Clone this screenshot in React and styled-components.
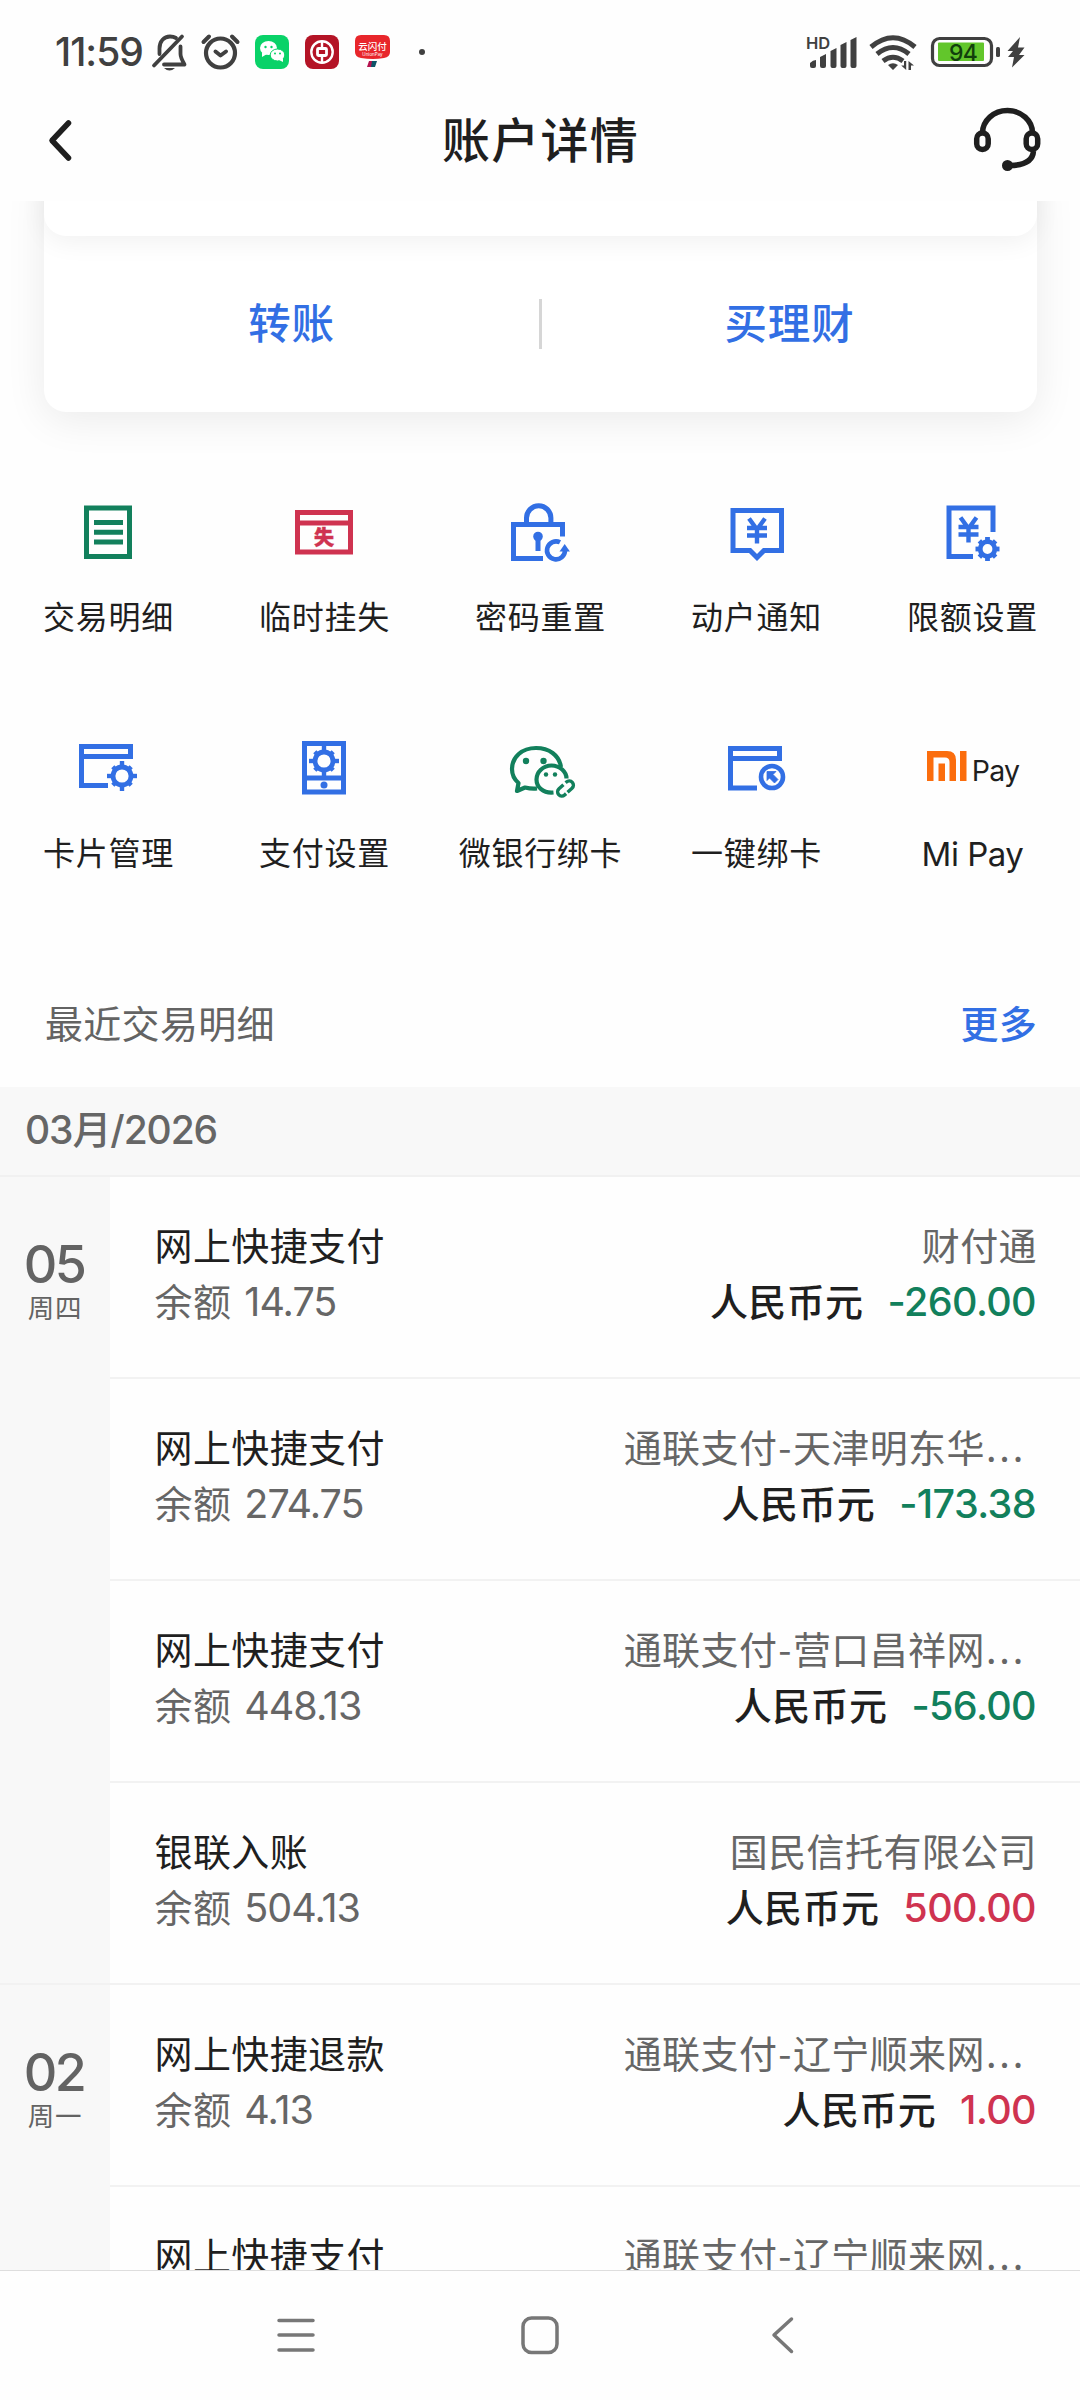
import React from "react";
import styled, { createGlobalStyle } from "styled-components";

const CJK = `"Noto Sans CJK SC", "Noto Sans", sans-serif`;
const NUM = `Inter, "Noto Sans CJK SC", sans-serif`;
const BLUE = "#326fe4";
const GREEN = "#12805c";
const RED = "#cf3350";

const GlobalStyle = createGlobalStyle`
  body { margin: 0; background: #fefefe; }
  * { box-sizing: border-box; }
  svg { display: block; overflow: visible; }
`;

const Screen = styled.div`
  width: 1080px;
  height: 2400px;
  display: flex;
  flex-direction: column;
  overflow: hidden;
  background: #fefefe;
  color: #1f1f1f;
  font-family: ${CJK};
  white-space: nowrap;
`;

const StatusBar = styled.div`
  flex: none;
  height: 104px;
  display: flex;
  align-items: center;
  justify-content: space-between;
  padding: 0 55px 0 55px;
`;
const Clock = styled.span`
  width: 93px;
  font: 500 39px/40px ${NUM};
  letter-spacing: -1px;
  color: #404040;
`;
const StatusGroup = styled.div`
  display: flex;
  align-items: center;
`;

const Header = styled.header`
  flex: none;
  height: 97px;
  display: flex;
  align-items: center;
  justify-content: space-between;
  padding: 0 39px 25px 48px;
`;
const Title = styled.h1`
  margin: -6px 8px 0 0;
  font: 500 48px/72px ${CJK};
  letter-spacing: 1.2px;
`;

const Content = styled.main`
  flex: none;
  height: 2069px;
  overflow: hidden;
`;

const Card = styled.section`
  margin: -40px 43px 0 44px;
  height: 251px;
  border-radius: 22px;
  background: #fff;
  box-shadow: 0 8px 40px rgba(0, 0, 0, 0.08);
`;
const CardTop = styled.div`
  height: 75px;
  border-radius: 22px;
  background: #fff;
  box-shadow: 0 6px 26px rgba(0, 0, 0, 0.06);
`;
const CardActions = styled.div`
  height: 176px;
  display: grid;
  grid-template-columns: 1fr 3px 1fr;
  align-items: center;
`;
const CardAction = styled.a`
  padding-bottom: 6px;
  text-align: center;
  color: ${BLUE};
  font: 500 42.5px/60px ${CJK};
  letter-spacing: 0.8px;
`;
const Divider = styled.i`
  height: 50px;
  background: #d6d6d6;
`;

const Grid = styled.div`
  margin-top: 70px;
  display: grid;
  grid-template-columns: repeat(5, 216px);
  grid-auto-rows: 236px;
`;
const Tile = styled.div`
  display: flex;
  flex-direction: column;
  align-items: center;
  padding-top: 10px;
`;
const IconBox = styled.div`
  height: 80px;
  display: flex;
  align-items: center;
`;
const TileLabel = styled.span`
  margin: 19px 0 0 1px;
  font: 400 32px/48px ${CJK};
  letter-spacing: 0.7px;
`;
const MiPayLabel = styled(TileLabel)`
  margin-top: 22px;
  font-size: 33px;
  font-family: ${NUM};
  letter-spacing: -0.5px;
`;
const MiPayLogo = styled.div`
  display: flex;
  align-items: flex-end;
  gap: 5px;
  margin: -4px 0 0 2px;
  font: 400 28.5px/20px ${NUM};
  letter-spacing: -0.7px;
`;

const SectionHead = styled.div`
  height: 133px;
  display: flex;
  align-items: center;
  justify-content: space-between;
  padding: 2px 43px 0 45px;
  font-size: 38px;
  letter-spacing: 0.3px;
  color: #636363;
`;
const More = styled.a`
  color: ${BLUE};
  font-weight: 500;
`;
const MonthBar = styled.div`
  height: 90px;
  padding: 0 25px 2px;
  display: flex;
  align-items: center;
  border-bottom: 2px solid #f1f1f1;
  background: #f8f8f8;
  color: #666;
  font: 500 39px/56px ${NUM};
  letter-spacing: -1.1px;
`;

const DayGroup = styled.section`
  display: grid;
  grid-template-columns: 110px 1fr;
  border-bottom: 2px solid #f2f2f2;
`;
const DayCell = styled.div`
  padding-top: 63px;
  display: flex;
  flex-direction: column;
  align-items: center;
  background: #f8f8f8;
  color: #636363;
`;
const DayNumber = styled.b`
  margin-right: 2px;
  font: 500 52px/50px ${NUM};
  letter-spacing: -2.5px;
`;
const Weekday = styled.span`
  margin-top: -1px;
  font-size: 26.5px;
  line-height: 36px;
  letter-spacing: 0.8px;
`;
const Row = styled.div`
  height: 202px;
  padding: 39px 43px 0 44.5px;
  display: grid;
  grid-template-columns: auto auto;
  grid-template-rows: 56px 55px;
  justify-content: space-between;
  border-bottom: 2px solid #f2f2f2;
  font-size: 38px;
  line-height: 55px;
  letter-spacing: 0.4px;
  &:last-child { height: 200px; border-bottom: 0; }
`;
const Sub = styled.span`
  color: #666;
`;
const Party = styled(Sub)`
  text-align: right;
`;
const Hyphen = styled.span`
  margin: 0 1px;
`;
const Ellipsis = styled.span`
  margin: 0 11px 0 1px;
  letter-spacing: 2.8px;
`;
const Num = styled.span`
  font-size: 39.5px;
  font-family: ${NUM};
  margin-left: 13px;
  letter-spacing: -1px;
`;
const AmountLine = styled.span`
  text-align: right;
  font-weight: 500;
`;
const Amount = styled.span`
  margin: 0 1px 0 24px;
  font-size: 39.5px;
  font-family: ${NUM};
  letter-spacing: -0.6px;
  color: ${(p) => (p.$income ? RED : GREEN)};
`;

const NavBar = styled.nav`
  height: 130px;
  padding-bottom: 2px;
  display: flex;
  justify-content: center;
  align-items: center;
  gap: 206px;
  border-top: 1px solid #dedede;
`;

const Gear = ({ cx, cy, r, ring, w, toothW, color = BLUE, tip }) => (
  <g stroke={color} fill="none">
    <circle cx={cx} cy={cy} r={ring} strokeWidth={w} />
    {[0, 45, 90, 135, 180, 225, 270, 315].map((a) => (
      <line
        key={a}
        x1={cx}
        y1={cy - ring}
        x2={cx}
        y2={cy - (a % 90 ? tip : r)}
        strokeWidth={toothW}
        transform={`rotate(${a} ${cx} ${cy})`}
      />
    ))}
  </g>
);

const TileSvg = ({ children, color = BLUE }) => (
  <svg width="80" height="80" viewBox="0 0 80 80" fill="none" stroke={color} strokeWidth="5">
    {children}
  </svg>
);

const Yuan = ({ x, y }) => (
  <path d={`M${x - 8} ${y - 12}l8 11l8 -11M${x} ${y - 2}v15M${x - 10} ${y - 2.5}h20M${x - 10} ${y + 5}h20`} strokeWidth="4.4" />
);

const DetailIcon = () => (
  <TileSvg color={GREEN}>
    <path d="M18.500 16h43v48.500h-43zM26 30.500h29M26 40.200h29M26 50h29" />
  </TileSvg>
);
const LossIcon = () => (
  <TileSvg color={RED}>
    <path d="M13.500 20.500h53v39.500h-53zM13.500 31h53" />
    <text x="40" y="52.500" textAnchor="middle" fill={RED} stroke={RED} strokeWidth="0.500" fontSize="20" fontWeight="900" fontFamily='"Noto Sans CJK SC", sans-serif'>失</text>
  </TileSvg>
);
const LockIcon = () => (
  <TileSvg>
    <path d="M43 66.500H13.500V32.500h49v12M26.500 32V26a12.200 12.200 0 0 1 24.400 0v6" />
    <circle cx="38" cy="44.500" r="4.800" fill={BLUE} stroke="none" />
    <path d="M38 46v13" />
    <path d="M60 50.300a9 9 0 1 0 5 8.200" strokeWidth="4.600" />
    <path d="M59.500 59.500l5.200 -7.500l5.200 7.500z" fill={BLUE} stroke="none" />
  </TileSvg>
);
const NoticeIcon = () => (
  <TileSvg>
    <path d="M17 18.500h48.500v40H48l-7 7l-7 -7H17z" />
    <Yuan x={41} y={38.5} />
  </TileSvg>
);
const LimitIcon = () => (
  <TileSvg>
    <path d="M61 40V16H17v48.500h24" />
    <Yuan x={36.5} y={37.5} />
    <Gear cx={55.5} cy={57} r={12} tip={11.5} ring={7.3} w={4.8} toothW={4.8} />
  </TileSvg>
);
const CardIcon = () => (
  <TileSvg>
    <path d="M40 57.500H13.500V18.500h49v10H13.500" />
    <Gear cx={54} cy={48} r={15} tip={13} ring={9} w={4.8} toothW={4.4} />
  </TileSvg>
);
const PayIcon = () => (
  <TileSvg>
    <path d="M20.500 15.500h39v48.500h-39zM20.500 50h39" />
    <Gear cx={40} cy={33} r={15} tip={13} ring={9} w={4.8} toothW={4.4} />
    <circle cx="40" cy="57" r="3.500" fill={BLUE} stroke="none" />
  </TileSvg>
);
const WechatBindIcon = () => (
  <TileSvg color={GREEN}>
    <path d="M61 39C59 27 49 20 36 20C22 20 12 29 12 41c0 6 3 11 6.500 14l-1.500 8l8 -3.500c4 1 8 1.500 12 1" strokeWidth="4.200" strokeLinejoin="round" />
    <path d="M53.500 64.500C43 65.500 36.500 59 36.500 51.500C36.500 44 43 37.500 51.500 37.500S66.500 44 66.500 50.500" strokeWidth="4.200" />
    <g fill={GREEN} stroke="none">
      <circle cx="26" cy="33" r="3.200" /><circle cx="43.500" cy="33" r="3.200" />
      <circle cx="46" cy="46.500" r="2.200" /><circle cx="55" cy="46.500" r="2.200" />
    </g>
    <g transform="translate(65.500 60.500) rotate(-42)" strokeWidth="3.400">
      <path d="M1 -4.200H-5a4.200 4.200 0 0 0 0 8.400H-3" />
      <path d="M-1 4.200H5a4.200 4.200 0 0 0 0 -8.400H4" />
    </g>
  </TileSvg>
);
const OneKeyIcon = () => (
  <TileSvg>
    <path d="M41 60H14.500V20.500h49v10H14.500" />
    <circle cx="56" cy="49" r="11" strokeWidth="4.600" />
    <path d="M51 43.500h9l-3 3l5 5l-3.500 3.500l-5 -5l-2.500 2.500z" fill={BLUE} stroke={BLUE} strokeWidth="0.800" />
  </TileSvg>
);
const MiPayIcon = () => (
  <MiPayLogo>
    <svg width="40" height="30" viewBox="0 0 40 30" fill="#fb6d0d">
      <path d="M0 0h20q9 0 9 9v21h-6.500V11q0 -4.500 -4.500 -4.500H6.500v23.500H0zM11.500 12.500h6.500v17.500h-6.500zM33 0h6.500v30h-6.500z" />
    </svg>
    Pay
  </MiPayLogo>
);

const tiles = [
  ["交易明细", DetailIcon],
  ["临时挂失", LossIcon],
  ["密码重置", LockIcon],
  ["动户通知", NoticeIcon],
  ["限额设置", LimitIcon],
  ["卡片管理", CardIcon],
  ["支付设置", PayIcon],
  ["微银行绑卡", WechatBindIcon],
  ["一键绑卡", OneKeyIcon],
  ["Mi Pay", MiPayIcon, true],
];

const days = [
  {
    day: "05",
    week: "周四",
    rows: [
      ["网上快捷支付", ["财付通"], "14.75", "-260.00"],
      ["网上快捷支付", ["通联支付", "天津明东华"], "274.75", "-173.38"],
      ["网上快捷支付", ["通联支付", "营口昌祥网"], "448.13", "-56.00"],
      ["银联入账", ["国民信托有限公司"], "504.13", "500.00"],
    ],
  },
  {
    day: "02",
    week: "周一",
    rows: [
      ["网上快捷退款", ["通联支付", "辽宁顺来网"], "4.13", "1.00"],
      ["网上快捷支付", ["通联支付", "辽宁顺来网"], "", ""],
    ],
  },
];

const StatusLeft = () => (
  <svg width="280" height="44" viewBox="148 30 280 44" fill="none" stroke="#404040">
    <path d="M154 65.500L182 36.500" strokeWidth="3.800" strokeLinecap="round" />
    <path d="M159.500 54V48.500C159.500 41 164 36.500 170 36.500q3.500 0 6 1.500M180.500 46.500V54q0 3.500 4 10.500H164" strokeWidth="3.800" strokeLinecap="round" strokeLinejoin="round" />
    <path d="M164 68h11q-5.500 5 -11 0z" fill="#404040" stroke="none" />
    <circle cx="220.500" cy="53" r="14.500" strokeWidth="4.200" />
    <path d="M215.500 51.500l5 4l5.500 -4M203.500 42l5.500 -5.500M237.500 42l-5.500 -5.500" strokeWidth="4" strokeLinecap="round" strokeLinejoin="round" />
    <rect x="255" y="35" width="34" height="34" rx="8" fill="#09d268" stroke="none" />
    <g fill="#fff" stroke="none">
      <ellipse cx="268.500" cy="48" rx="8.500" ry="7" /><path d="M262 52l0 5l5 -3z" />
      <ellipse cx="277.500" cy="55" rx="7.300" ry="6" stroke="#09d268" /><path d="M279 60l4 2l0 -4z" />
    </g>
    <g fill="#09d268" stroke="none"><circle cx="265.500" cy="47" r="1.200" /><circle cx="271.500" cy="47" r="1.200" /><circle cx="275" cy="53.500" r="1" /><circle cx="280" cy="53.500" r="1" /></g>
    <rect x="305" y="35" width="34" height="34" rx="8" fill="#b41426" stroke="none" />
    <g stroke="#fff" strokeWidth="2.400"><circle cx="322" cy="52" r="10.700" /><rect x="317.500" y="48.500" width="9" height="7" rx="1" strokeWidth="2.800" /><path d="M322 41.500v7M322 56v7" /></g>
    <path d="M361 35h23q6 0 6 6v11q0 5 -6 6q-11 2 -23 0q-6 -1 -6 -6V41q0 -6 6 -6z" fill="#e8262b" stroke="none" />
    <path d="M369 61h5l-1 6h-6z" fill="#b5124f" stroke="none" /><path d="M372 61h5l-2 6h-4z" fill="#0d5468" stroke="none" />
    <text x="372.500" y="50" textAnchor="middle" fill="#fff" stroke="none" fontSize="9.500" fontWeight="500" fontFamily='"Noto Sans CJK SC", sans-serif'>云闪付</text>
    <text x="372.500" y="55.500" textAnchor="middle" fill="#fff" stroke="none" fontSize="4.500" fontFamily="Inter, sans-serif">UnionPay</text>
    <circle cx="422" cy="52" r="3" fill="#404040" stroke="none" />
  </svg>
);

const StatusRight = () => (
  <svg width="220" height="44" viewBox="805 30 220 44" fill="#404040">
    <text x="806" y="48.500" fontSize="16.500" fontWeight="600" fontFamily="Inter, sans-serif">HD</text>
    <path d="M810 63q3 -3 6 -3v6q0 2 -2 2h-2q-2 0 -2 -2zM820 57l6 -3v12q0 2 -2 2h-2q-2 0 -2 -2zM830.500 51l6 -3v18q0 2 -2 2h-2q-2 0 -2 -2zM840.500 45l6 -3v24q0 2 -2 2h-2q-2 0 -2 -2zM850.500 40l6 -3v29q0 2 -2 2h-2q-2 0 -2 -2z" />
    <g fill="none" stroke="#404040" strokeWidth="5">
      <path d="M871 47q22 -18.500 44 0M877 54q16 -13 32 0M883 61q10 -7.500 20 0" />
    </g>
    <path d="M888 65q5 -3.500 10 0l-5 5zM904 61h2.200v9l-5 -4.500h2.800zM908.500 70v-9l5.500 4.500h-3v4.500z" />
    <rect x="932.500" y="38.500" width="59" height="27" rx="7" fill="none" stroke="#404040" strokeWidth="3.200" />
    <rect x="938" y="42.500" width="46" height="18.500" rx="1" fill="#62c62b" />
    <text x="963" y="60.500" textAnchor="middle" fill="#12400c" fontSize="23" fontWeight="500" letterSpacing="-0.800" fontFamily="Inter, sans-serif">94</text>
    <rect x="996" y="47" width="4" height="10" rx="1.500" />
    <path d="M1020 37L1007.500 51H1013L1008 57H1014L1012 67.500L1024.500 55H1019L1024.500 47.500H1018z" />
  </svg>
);

export default function App() {
  return (
    <Screen>
      <GlobalStyle />
      <StatusBar>
        <StatusGroup>
          <Clock>11:59</Clock>
          <StatusLeft />
        </StatusGroup>
        <StatusRight />
      </StatusBar>
      <Header>
        <svg width="68" height="44" viewBox="48 118 68 44" fill="none" stroke="#1f1f1f" strokeWidth="5.500" strokeLinecap="round" strokeLinejoin="round">
          <path d="M68.500 123L52 140.500L68.500 158" />
        </svg>
        <Title>账户详情</Title>
        <svg width="68" height="64" viewBox="972.500 109 68 64" fill="none" stroke="#1f1f1f" strokeWidth="5.500">
          <path d="M982 134a25 22.500 0 0 1 50 0M1033 152q-1 14 -23 14.500" />
          <rect x="976.200" y="134" width="11.500" height="16.500" rx="5.700" />
          <rect x="1025.700" y="134" width="11.500" height="16.500" rx="5.700" />
          <circle cx="1007" cy="166.500" r="5.500" fill="#1f1f1f" stroke="none" />
        </svg>
      </Header>
      <Content>
        <Card>
          <CardTop />
          <CardActions>
            <CardAction>转账</CardAction>
            <Divider />
            <CardAction>买理财</CardAction>
          </CardActions>
        </Card>
        <Grid>
          {tiles.map(([label, Icon, latin]) => (
            <Tile key={label}>
              <IconBox><Icon /></IconBox>
              {latin ? <MiPayLabel>{label}</MiPayLabel> : <TileLabel>{label}</TileLabel>}
            </Tile>
          ))}
        </Grid>
        <SectionHead>
          <span>最近交易明细</span>
          <More>更多</More>
        </SectionHead>
        <MonthBar>03月/2026</MonthBar>
        {days.map((d) => (
          <DayGroup key={d.day}>
            <DayCell>
              <DayNumber>{d.day}</DayNumber>
              <Weekday>{d.week}</Weekday>
            </DayCell>
            <div>
              {d.rows.map(([title, [party, detail], balance, amount], i) => (
                <Row key={i}>
                  <span>{title}</span>
                  <Party>
                    {party}
                    {detail && <><Hyphen>-</Hyphen>{detail}<Ellipsis>...</Ellipsis></>}
                  </Party>
                  {balance && <Sub>余额<Num>{balance}</Num></Sub>}
                  {amount && (
                    <AmountLine>
                      人民币元<Amount $income={!amount.startsWith("-")}>{amount}</Amount>
                    </AmountLine>
                  )}
                </Row>
              ))}
            </div>
          </DayGroup>
        ))}
      </Content>
      <NavBar>
        <svg width="38" height="38" viewBox="0 0 38 38" stroke="#777" strokeWidth="3.500" strokeLinecap="round"><path d="M2 4.500h34M2 19h34M2 34h34" /></svg>
        <svg width="38" height="38" viewBox="0 0 38 38" fill="none" stroke="#777" strokeWidth="3.500"><rect x="2" y="2" width="34" height="34.500" rx="8.500" /></svg>
        <svg width="38" height="38" viewBox="0 0 38 38" fill="none" stroke="#777" strokeWidth="3.500" strokeLinecap="round" strokeLinejoin="round"><path d="M26.500 3L9 19L26.500 35.500" /></svg>
      </NavBar>
    </Screen>
  );
}
